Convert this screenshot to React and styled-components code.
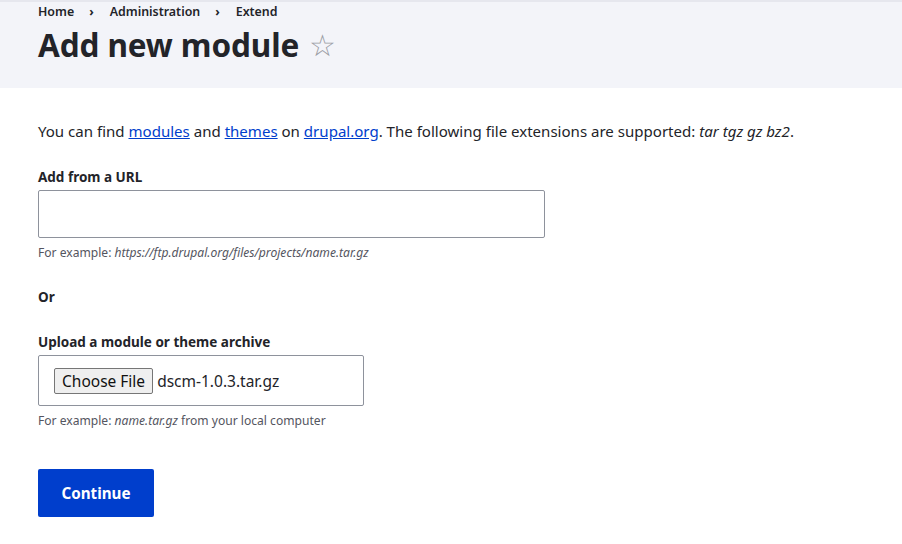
import React from 'react'
import styled, { createGlobalStyle } from 'styled-components'

const GlobalStyle = createGlobalStyle`
  body {
    margin: 0;
    background: #fff;
    font-family: "Noto Sans", "Open Sans", sans-serif;
    color: #232429;
  }
`

const Header = styled.div`
  background: #f3f4f9;
  border-top: 2px solid #e6e7ee;
  padding: 1px 38px 0;
  height: 88px;
  box-sizing: border-box;
`

const Breadcrumb = styled.ol`
  list-style: none;
  margin: 0;
  padding: 0;
  display: flex;
  align-items: center;
  font-size: 12.4px;
  font-weight: 600;
  line-height: 18px;

  & li + li::before {
    content: '›';
    display: inline-block;
    margin: 0 16px 0 15px;
    font-weight: 700;
  }
`

const Title = styled.h1`
  margin: 4px 0 0;
  font-size: 31.5px;
  font-weight: 700;
  line-height: 40px;
  display: flex;
  align-items: center;
  letter-spacing: -0.1px;
`

const Star = styled.span`
  margin-left: 10px;
  font-size: 30px;
  font-weight: 400;
  color: #9a9ca4;
`

const Main = styled.div`
  padding: 31px 38px 0;
`

const Intro = styled.p`
  margin: 0;
  font-size: 15.05px;
  line-height: 24px;

  & a {
    color: #003ecc;
    text-decoration: underline;
  }
`

const Field = styled.div`
  margin-top: ${(p) => p.$top}px;
`

const Label = styled.div`
  font-size: 13.5px;
  font-weight: 700;
  line-height: 18px;
  margin-bottom: 4px;
`

const TextInput = styled.div`
  width: 507px;
  height: 48px;
  box-sizing: border-box;
  border: 1px solid #8e929c;
  border-radius: 2px;
  background: #fff;
`

const FileBox = styled.div`
  width: 326px;
  height: 51px;
  box-sizing: border-box;
  border: 1px solid #8e929c;
  border-radius: 2px;
  display: flex;
  align-items: center;
  padding: 0 15px;
  font-size: 15.5px;
`

const FileButton = styled.span`
  display: inline-flex;
  align-items: center;
  height: 26px;
  box-sizing: border-box;
  padding: 0 7px;
  border: 1px solid #767676;
  border-radius: 2px;
  background: #efefef;
  margin-right: 4px;
  color: #111;
`

const Description = styled.div`
  margin-top: 7px;
  font-size: 12.1px;
  line-height: 16px;
  color: #545560;
`

const OrLabel = styled.div`
  margin-top: 27px;
  font-size: 13.5px;
  font-weight: 700;
  line-height: 18px;
`

const Button = styled.button`
  margin-top: 40px;
  width: 116px;
  height: 48px;
  border: 0;
  border-radius: 2px;
  background: #003ecc;
  color: #fff;
  font-family: inherit;
  font-size: 15.2px;
  font-weight: 700;
`

export default function App() {
  return (
    <>
      <GlobalStyle />
      <Header>
        <Breadcrumb>
          <li>Home</li>
          <li>Administration</li>
          <li>Extend</li>
        </Breadcrumb>
        <Title>
          Add new module <Star>☆</Star>
        </Title>
      </Header>
      <Main>
        <Intro>
          You can find <a href="#">modules</a> and <a href="#">themes</a> on{' '}
          <a href="#">drupal.org</a>. The following file extensions are supported:{' '}
          <em>tar tgz gz bz2</em>.
        </Intro>
        <Field $top={25}>
          <Label>Add from a URL</Label>
          <TextInput />
          <Description>
            For example: <em>https://ftp.drupal.org/files/projects/name.tar.gz</em>
          </Description>
        </Field>
        <OrLabel>Or</OrLabel>
        <Field $top={27}>
          <Label>Upload a module or theme archive</Label>
          <FileBox>
            <FileButton>Choose File</FileButton>
            dscm-1.0.3.tar.gz
          </FileBox>
          <Description>
            For example: <em>name.tar.gz</em> from your local computer
          </Description>
        </Field>
        <Button>Continue</Button>
      </Main>
    </>
  )
}
